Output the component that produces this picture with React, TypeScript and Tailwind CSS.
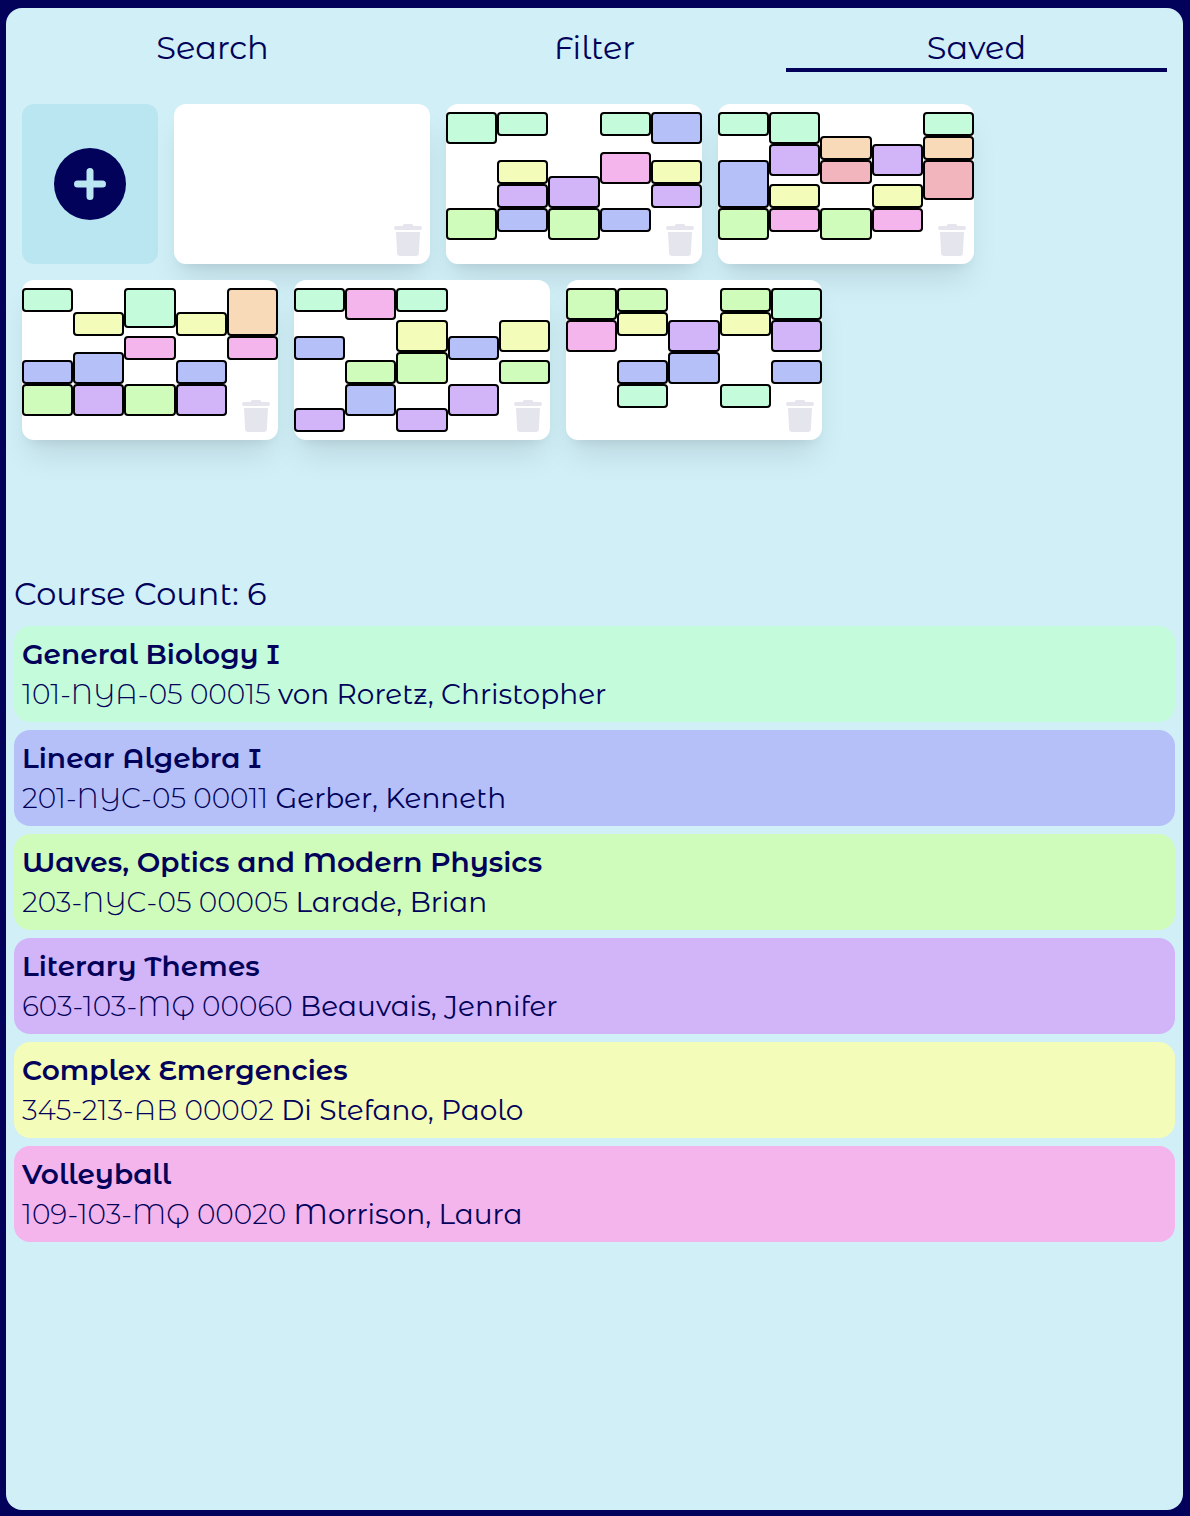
import React, { useState } from "react";

type Tone = "mint" | "blue" | "lime" | "purple" | "yellow" | "pink" | "orange" | "red";

const tones: Record<Tone, string> = {
  mint: "bg-[#c4fbdb]",
  blue: "bg-[#b5c0f9]",
  lime: "bg-[#cffcba]",
  purple: "bg-[#d2b5f9]",
  yellow: "bg-[#f4fcba]",
  pink: "bg-[#f3b5ec]",
  orange: "bg-[#f8d9b8]",
  red: "bg-[#f3b5bd]",
};

// One array per weekday; each block is [tone, start slot, end slot].
type Block = [Tone, number, number];
type Week = Block[][];

const schedules: Week[] = [
  [],
  [
    [["mint", 0, 4], ["lime", 12, 16]],
    [["mint", 0, 3], ["yellow", 6, 9], ["purple", 9, 12], ["blue", 12, 15]],
    [["purple", 8, 12], ["lime", 12, 16]],
    [["mint", 0, 3], ["pink", 5, 9], ["blue", 12, 15]],
    [["blue", 0, 4], ["yellow", 6, 9], ["purple", 9, 12]],
  ],
  [
    [["mint", 0, 3], ["blue", 6, 12], ["lime", 12, 16]],
    [["mint", 0, 4], ["purple", 4, 8], ["yellow", 9, 12], ["pink", 12, 15]],
    [["orange", 3, 6], ["red", 6, 9], ["lime", 12, 16]],
    [["purple", 4, 8], ["yellow", 9, 12], ["pink", 12, 15]],
    [["mint", 0, 3], ["orange", 3, 6], ["red", 6, 11]],
  ],
  [
    [["mint", 0, 3], ["blue", 9, 12], ["lime", 12, 16]],
    [["yellow", 3, 6], ["blue", 8, 12], ["purple", 12, 16]],
    [["mint", 0, 5], ["pink", 6, 9], ["lime", 12, 16]],
    [["yellow", 3, 6], ["blue", 9, 12], ["purple", 12, 16]],
    [["orange", 0, 6], ["pink", 6, 9]],
  ],
  [
    [["mint", 0, 3], ["blue", 6, 9], ["purple", 15, 18]],
    [["pink", 0, 4], ["lime", 9, 12], ["blue", 12, 16]],
    [["mint", 0, 3], ["yellow", 4, 8], ["lime", 8, 12], ["purple", 15, 18]],
    [["blue", 6, 9], ["purple", 12, 16]],
    [["yellow", 4, 8], ["lime", 9, 12]],
  ],
  [
    [["lime", 0, 4], ["pink", 4, 8]],
    [["lime", 0, 3], ["yellow", 3, 6], ["blue", 9, 12], ["mint", 12, 15]],
    [["purple", 4, 8], ["blue", 8, 12]],
    [["lime", 0, 3], ["yellow", 3, 6], ["mint", 12, 15]],
    [["mint", 0, 4], ["purple", 4, 8], ["blue", 9, 12]],
  ],
];

const courses: { title: string; code: string; teacher: string; tone: Tone }[] = [
  { title: "General Biology I", code: "101-NYA-05 00015", teacher: "von Roretz, Christopher", tone: "mint" },
  { title: "Linear Algebra I", code: "201-NYC-05 00011", teacher: "Gerber, Kenneth", tone: "blue" },
  { title: "Waves, Optics and Modern Physics", code: "203-NYC-05 00005", teacher: "Larade, Brian", tone: "lime" },
  { title: "Literary Themes", code: "603-103-MQ 00060", teacher: "Beauvais, Jennifer", tone: "purple" },
  { title: "Complex Emergencies", code: "345-213-AB 00002", teacher: "Di Stefano, Paolo", tone: "yellow" },
  { title: "Volleyball", code: "109-103-MQ 00020", teacher: "Morrison, Laura", tone: "pink" },
];

function TrashIcon() {
  return (
    <svg viewBox="0 0 28 32" className="h-8 w-7" fill="currentColor" aria-hidden="true">
      <path d="M2 2h6c.8 0 .9-2 3-2h6c2.100 0 2.200 2 3 2h6a2 2 0 0 1 0 4H2a2 2 0 0 1 0-4Z" />
      <path d="M2 8h24l-1.200 21.200A3 3 0 0 1 21.800 32H6.200a3 3 0 0 1-3-2.800Z" />
    </svg>
  );
}

function PlusIcon() {
  return (
    <svg viewBox="0 0 72 72" className="size-18" aria-hidden="true">
      <circle cx="36" cy="36" r="36" fill="#02025a" />
      <path d="M36 23.500v25M23.500 36h25" stroke="#bae6f2" strokeWidth="7" strokeLinecap="round" />
    </svg>
  );
}

function ScheduleCard({ week, index }: { week: Week; index: number }) {
  return (
    <article
      aria-label={`Schedule ${index + 1}`}
      className="relative h-40 w-64 rounded-xl bg-white py-2 shadow-[0_20px_30px_-6px_rgba(0,0,0,0.1),0_8px_12px_-8px_rgba(0,0,0,0.1)]"
    >
      <div className="grid grid-cols-5 grid-rows-[repeat(18,8px)]">
        {week.map((day, d) =>
          day.map(([tone, start, end]) => (
            <div
              key={`${d}-${start}`}
              className={`rounded border-2 border-black ${tones[tone]}`}
              style={{ gridColumn: d + 1, gridRow: `${start + 1} / ${end + 1}` }}
            />
          ))
        )}
      </div>
      <button type="button" aria-label="Delete schedule" className="absolute right-2 bottom-2 text-[#e5e5ee]">
        <TrashIcon />
      </button>
    </article>
  );
}

export default function App() {
  const tabs = ["Search", "Filter", "Saved"];
  const [active, setActive] = useState("Saved");
  return (
    <div className="flex min-h-screen bg-[#02025a] pt-2 pr-[7px] pb-1.5 pl-1.5 font-['Montserrat_Alternates','Inter',sans-serif] text-[#02025a]">
      <main className="flex grow flex-col rounded-2xl bg-[#d0eff7]">
        <nav className="grid grid-cols-3 gap-px px-4 pt-4">
          {tabs.map((tab) => (
            <button
              key={tab}
              type="button"
              onClick={() => setActive(tab)}
              className={`h-12 border-b-4 text-[32px] leading-12 ${tab === active ? "border-[#02025a]" : "border-transparent"}`}
            >
              {tab}
            </button>
          ))}
        </nav>
        <section aria-label="Saved schedules" className="flex min-h-[498px] flex-wrap content-start gap-4 px-4 pt-8">
          <button
            type="button"
            aria-label="Add schedule"
            className="flex h-40 w-34 items-center justify-center rounded-xl bg-[#bae6f2]"
          >
            <PlusIcon />
          </button>
          {schedules.map((week, i) => (
            <ScheduleCard key={i} week={week} index={i} />
          ))}
        </section>
        <section className="px-2 pb-2">
          <h2 className="text-[32px] leading-12">Course Count: {courses.length}</h2>
          <ul className="mt-2 flex flex-col gap-2">
            {courses.map((c) => (
              <li key={c.title} className={`rounded-2xl p-2 text-[28px] leading-10 ${tones[c.tone]}`}>
                <h3 className="font-semibold">{c.title}</h3>
                <p>
                  <span className="font-light">{c.code}</span> {c.teacher}
                </p>
              </li>
            ))}
          </ul>
        </section>
      </main>
    </div>
  );
}
